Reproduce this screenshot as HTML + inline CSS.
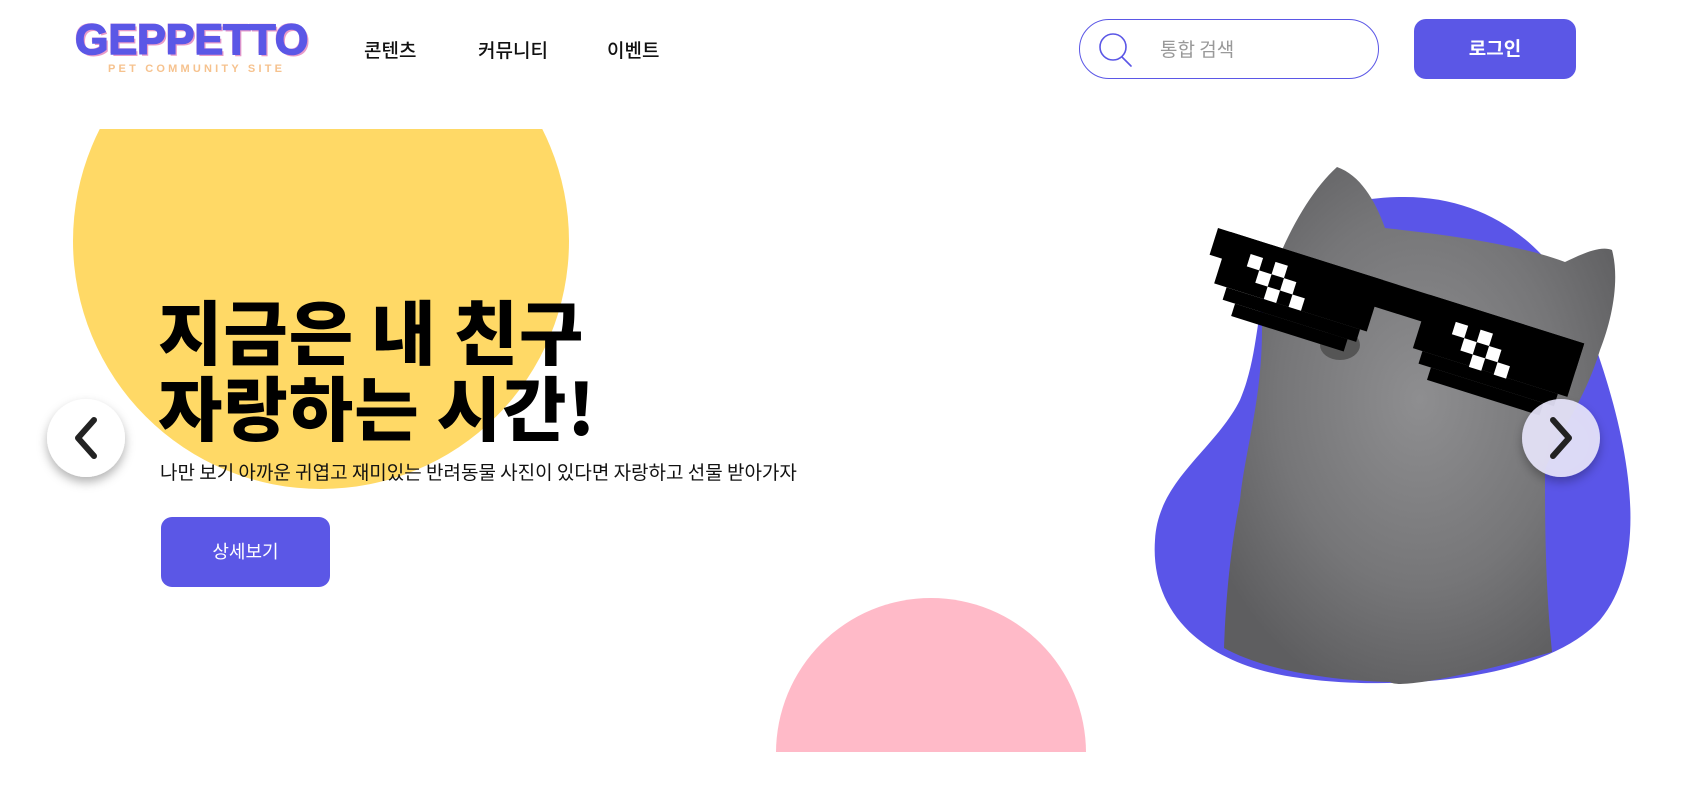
<!DOCTYPE html>
<html><head><meta charset="utf-8"><style>
*{margin:0;padding:0;box-sizing:border-box}
html{overflow:hidden}
body{width:1690px;height:798px;background:#fff;position:relative;overflow:hidden;font-family:"Liberation Sans","Noto Sans CJK KR",sans-serif}
.abs{position:absolute}
.logo{left:75px;top:15px;font-size:43px;font-weight:900;color:#5b57e6;letter-spacing:0px;-webkit-text-stroke:1.5px #5b57e6;text-shadow:2px 2px 0 #e89ac8,-1px -1px 0 #f0a8d8;line-height:50px;white-space:nowrap}
.sub{left:108px;top:63px;font-size:11px;font-weight:bold;color:#f6c28e;letter-spacing:3.2px;white-space:nowrap}
.nav{top:36px;font-size:19px;font-weight:500;color:#111;font-family:"Noto Sans CJK KR",sans-serif}
.search{left:1079px;top:19px;width:300px;height:60px;border:1px solid #5b57e6;border-radius:30px}
.ph{left:1160px;top:35px;font-size:19px;color:#999;font-family:"Noto Sans CJK KR",sans-serif}
.login{left:1414px;top:19px;width:162px;height:60px;background:#5b57e6;border-radius:12px;color:#fff;font-size:19px;font-weight:bold;text-align:center;line-height:58px;font-family:"Noto Sans CJK KR",sans-serif}
.h1{left:158px;top:292px;font-size:70px;font-weight:900;line-height:76px;color:#000;font-family:"Noto Sans CJK KR",sans-serif;letter-spacing:1px;white-space:nowrap}
.p{left:160px;top:458px;font-size:19px;color:#111;font-family:"Noto Sans CJK KR",sans-serif;white-space:nowrap}
.btn{left:161px;top:517px;width:169px;height:70px;background:#5b57e6;border-radius:11px;color:#fff;font-size:18px;text-align:center;line-height:68px;font-family:"Noto Sans CJK KR",sans-serif}
</style></head><body>
<svg class="abs" style="left:0;top:0" width="1690" height="798">
  <defs><clipPath id="cy"><rect x="0" y="129" width="900" height="700"/></clipPath>
  <clipPath id="cp"><rect x="700" y="500" width="500" height="252"/></clipPath>
  <radialGradient id="fur" cx="0.5" cy="0.45" r="0.6"><stop offset="0" stop-color="#8e8e90"/><stop offset="0.6" stop-color="#767678"/><stop offset="1" stop-color="#5e5e60"/></radialGradient>
  <filter id="sh" x="-50%" y="-50%" width="200%" height="200%"><feDropShadow dx="0" dy="5" stdDeviation="5" flood-opacity="0.3"/></filter></defs>
  <circle cx="321" cy="241" r="248" fill="#ffd966" clip-path="url(#cy)"/>
  <circle cx="931" cy="753" r="155" fill="#ffbac8" clip-path="url(#cp)"/>
  <path d="M1400 197 C1500 195,1570 260,1600 360 C1630 450,1650 560,1600 620 C1540 685,1380 690,1300 678 C1200 665,1150 610,1155 540 C1158 480,1215 450,1240 400 C1265 340,1250 290,1290 240 C1320 205,1360 198,1400 197 Z" fill="#5a55e8"/>
  <path d="M1262 330 C1262 280,1300 200,1337 167 C1360 175,1375 200,1385 228 C1450 235,1520 245,1565 262 C1580 255,1600 245,1612 250 C1620 280,1612 320,1600 350 C1585 400,1560 430,1545 470 C1545 520,1545 580,1552 652 C1480 672,1400 690,1390 682 C1320 680,1260 668,1224 648 C1226 590,1232 540,1240 500 C1245 450,1262 400,1262 330 Z" fill="url(#fur)"/>
  <ellipse cx="1340" cy="345" rx="20" ry="15" fill="#555"/>
  <g transform="translate(1218,228) rotate(17.5)">
    <rect x="0" y="0" width="384" height="28" fill="#000"/>
    <rect x="13" y="0" width="160" height="54" fill="#000"/>
    <rect x="26" y="54" width="140" height="13" fill="#000"/>
    <rect x="39" y="67" width="118" height="13" fill="#000"/>
    <rect x="222" y="0" width="162" height="56" fill="#000"/>
    <rect x="232" y="56" width="142" height="13" fill="#000"/>
    <rect x="245" y="69" width="118" height="13" fill="#000"/>
    <g fill="#fff">
      <rect x="39" y="15" width="13" height="13"/><rect x="65" y="15" width="13" height="13"/>
      <rect x="52" y="28" width="13" height="13"/><rect x="78" y="28" width="13" height="13"/>
      <rect x="65" y="41" width="13" height="13"/><rect x="91" y="41" width="13" height="13"/>
      <rect x="255" y="18" width="13" height="13"/><rect x="281" y="18" width="13" height="13"/>
      <rect x="268" y="31" width="13" height="13"/><rect x="294" y="31" width="13" height="13"/>
      <rect x="281" y="44" width="13" height="13"/><rect x="307" y="44" width="13" height="13"/>
    </g>
  </g>
  <circle cx="86" cy="438" r="39" fill="#fff" filter="url(#sh)"/>
  <path d="M94 420 L78 438 L94 456" fill="none" stroke="#222" stroke-width="6" stroke-linecap="round" stroke-linejoin="round"/>
  <circle cx="1561" cy="438" r="39" fill="#e6e4fa" fill-opacity="0.92" filter="url(#sh)"/>
  <path d="M1553 420 L1569 438 L1553 456" fill="none" stroke="#222" stroke-width="6" stroke-linecap="round" stroke-linejoin="round"/>
  <circle cx="1113" cy="47" r="13" fill="none" stroke="#5b57e6" stroke-width="1.6"/>
  <path d="M1122 57 L1131 66" stroke="#5b57e6" stroke-width="1.6" stroke-linecap="round"/>
</svg>
<div class="abs logo">GEPPETTO</div>
<div class="abs sub">PET COMMUNITY SITE</div>
<div class="abs nav" style="left:364px">콘텐츠</div>
<div class="abs nav" style="left:478px">커뮤니티</div>
<div class="abs nav" style="left:607px">이벤트</div>
<div class="abs search"></div>
<div class="abs ph">통합 검색</div>
<div class="abs login">로그인</div>
<div class="abs h1">지금은 내 친구<br>자랑하는 시간!</div>
<div class="abs p">나만 보기 아까운 귀엽고 재미있는 반려동물 사진이 있다면 자랑하고 선물 받아가자</div>
<div class="abs btn">상세보기</div>
</body></html>
